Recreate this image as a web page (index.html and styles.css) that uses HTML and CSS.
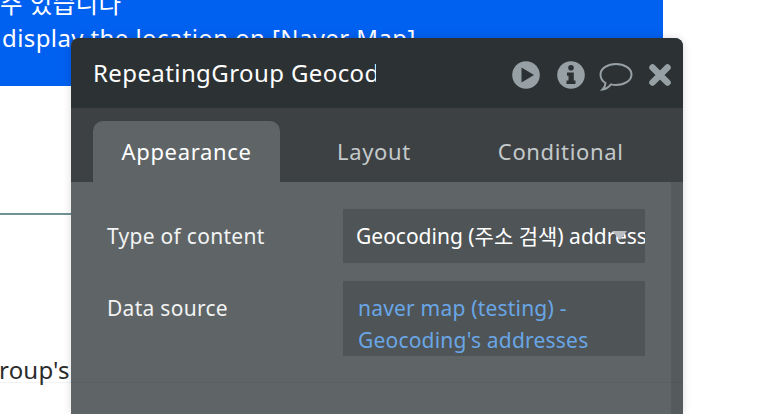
FILE: index.html
```html
<!DOCTYPE html>
<html lang="en">
<head>
<meta charset="utf-8">
<title>RepeatingGroup Geocoding</title>
<link rel="stylesheet" href="styles.css">
</head>
<body>
<div class="page">
  <div class="banner">
    <div class="banner-ko">주 있습니다</div>
    <div class="banner-en">display the location on [Naver Map]</div>
  </div>
  <div class="rule"></div>
  <div class="group-text">roup's</div>
  <div class="window">
    <div class="titlebar">
      <div class="title">RepeatingGroup Geocoding</div>
      <div class="actions">
        <svg class="icon" width="28" height="28" viewBox="0 0 28 28"><circle cx="14" cy="14" r="13.800" fill="#97a0a4"/><path d="M9.500 6.500 L22 14 L9.500 21.500Z" fill="#2c3133"/></svg>
        <svg class="icon" width="28" height="28" viewBox="0 0 28 28"><circle cx="14" cy="14" r="13.800" fill="#97a0a4"/><circle cx="14" cy="6.800" r="2.800" fill="#2c3133"/><path d="M10 11.500 H16.800 V19.500 H18.500 V23 H9.500 V19.500 H11.500 V14.800 H10Z" fill="#2c3133"/></svg>
        <svg class="icon-chat" width="34" height="30" viewBox="0 0 34 30"><path d="M17 2 C25 2 32.500 6 32.500 12.500 C32.500 19 25 23 17 23 C15 23 13.500 22.800 12 22.400 C10 25 7.500 27 3.500 27.500 C5.500 25.500 6.500 23.500 6.500 21 C3 19 1.500 16 1.500 12.500 C1.500 6 9 2 17 2Z" fill="none" stroke="#97a0a4" stroke-width="2"/></svg>
        <svg class="icon-close" width="24" height="24" viewBox="0 0 24 24"><path d="M4.500 4.500 L19.500 19.500 M19.500 4.500 L4.500 19.500" stroke="#97a0a4" stroke-width="6.500" stroke-linecap="round"/></svg>
      </div>
    </div>
    <div class="tabs">
      <div class="tab tab-active">Appearance</div>
      <div class="tab tab-layout">Layout</div>
      <div class="tab tab-cond">Conditional</div>
    </div>
    <div class="body">
      <div class="content">
        <div class="row">
          <div class="label">Type of content</div>
          <div class="field field-select">
            <span class="field-text">Geocoding (주소 검색) addresses</span>
            <span class="caret"></span>
          </div>
        </div>
        <div class="row row-source">
          <div class="label">Data source</div>
          <div class="field field-source">naver map (testing) - Geocoding's addresses</div>
        </div>
      </div>
      <div class="scrollbar"></div>
    </div>
  </div>
  <div class="ghost-line"></div>
</div>
</body>
</html>
```
FILE: styles.css
```css
html, body {
  margin: 0;
  padding: 0;
  height: 100%;
  background: #ffffff;
  overflow: hidden;
}
.page {
  position: relative;
  width: 782px;
  height: 414px;
  overflow: hidden;
  font-family: "Noto Sans", "Noto Sans CJK KR", sans-serif;
}
.banner {
  width: 663px;
  height: 86px;
  background: #0060f0;
  color: #ffffff;
  font-size: 24px;
  letter-spacing: 0.4px;
  line-height: 32px;
  position: relative;
}
.banner-ko {
  position: absolute;
  top: -12px;
  left: 0;
  font-size: 24.5px;
  white-space: nowrap;
}
.banner-en {
  position: absolute;
  top: 22px;
  left: 2px;
  white-space: nowrap;
}
.rule {
  position: absolute;
  left: 0;
  top: 213px;
  width: 72px;
  height: 2px;
  background: #6f9296;
}
.group-text {
  position: absolute;
  left: -1px;
  top: 354px;
  font-size: 24px;
  letter-spacing: 0.2px;
  line-height: 32px;
  color: #2b2b2b;
}
.ghost-line {
  position: absolute;
  left: 0;
  top: 382px;
  width: 683px;
  height: 1px;
  background: rgba(0, 0, 0, 0.05);
}
.window {
  position: absolute;
  left: 71px;
  top: 38px;
  width: 612px;
  height: 376px;
  border-radius: 8px 8px 0 0;
  background: #5f6567;
  box-shadow: 0 0 8px rgba(0, 0, 0, 0.14);
  display: flex;
  flex-direction: column;
  overflow: hidden;
}
.titlebar {
  height: 70px;
  flex: none;
  background: #2c3133;
  display: flex;
  align-items: center;
  padding-left: 22px;
  box-sizing: border-box;
}
.title {
  width: 283px;
  overflow: hidden;
  white-space: nowrap;
  color: #ffffff;
  font-size: 24px;
  letter-spacing: 0.4px;
  line-height: 30px;
  margin-top: -1px;
}
.actions {
  margin-left: 136px;
  display: flex;
  align-items: center;
  margin-top: 4px;
}
.icon { flex: none; }
.icon + .icon { margin-left: 17px; }
.icon-chat { flex: none; margin-left: 14px; margin-top: 3px; }
.icon-close { flex: none; margin-left: 15px; }
.tabs {
  height: 74px;
  flex: none;
  background: #3d4143;
  display: flex;
  align-items: flex-end;
  padding-left: 22px;
  box-sizing: border-box;
  color: #c4c9cb;
  font-size: 22px;
}
.tab {
  height: 61px;
  line-height: 60px;
  letter-spacing: 0.65px;
  white-space: nowrap;
}
.tab-active {
  width: 187px;
  text-align: center;
  background: #5f6567;
  color: #ffffff;
  border-radius: 10px 10px 0 0;
}
.tab-layout { margin-left: 57px; }
.tab-cond { margin-left: 87px; }
.body {
  flex: 1;
  display: flex;
  min-height: 0;
}
.content {
  flex: 1;
  padding: 27px 26px 0 36px;
  min-width: 0;
}
.scrollbar {
  width: 12px;
  flex: none;
  background: #555a5c;
}
.row {
  display: flex;
  align-items: flex-start;
}
.row-source { margin-top: 18px; }
.label {
  width: 236px;
  flex: none;
  color: #f2f3f3;
  font-size: 21px;
  letter-spacing: 0.28px;
  line-height: 54px;
}
.row-source .label { line-height: 55px; }
.field {
  width: 302px;
  flex: none;
  background: #4f5456;
  box-sizing: border-box;
  font-size: 21px;
}
.field-select {
  height: 54px;
  padding-left: 13px;
  position: relative;
  overflow: hidden;
  color: #ffffff;
  line-height: 54px;
  white-space: nowrap;
}
.field-text {
  display: block;
  overflow: hidden;
}
.caret {
  position: absolute;
  left: 269px;
  top: 22px;
  width: 0;
  height: 0;
  border-left: 8px solid transparent;
  border-right: 7px solid transparent;
  border-top: 9px solid #b9bdbf;
}
.field-source {
  height: 75px;
  overflow: hidden;
  padding: 11px 20px 0 15px;
  color: #69a6e6;
  letter-spacing: 0.2px;
  line-height: 32px;
}
```
